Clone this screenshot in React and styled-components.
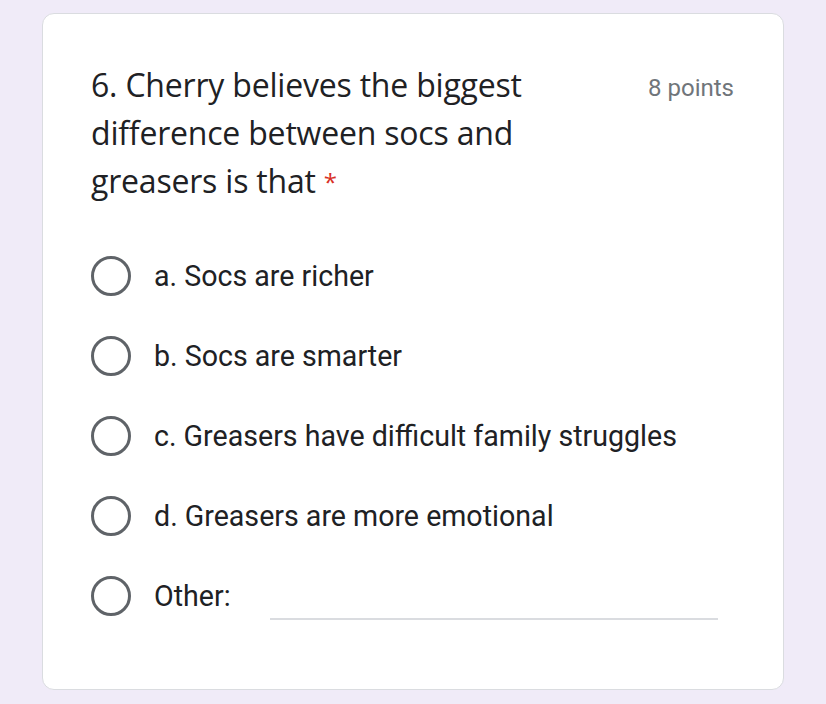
import styled, { createGlobalStyle } from "styled-components";

const Global = createGlobalStyle`
  html, body {
    margin: 0;
    padding: 0;
    background: #f0ebf8;
  }
`;

const Page = styled.div`
  width: 826px;
  height: 704px;
  box-sizing: border-box;
  padding: 13px 42px 14px 42px;
`;

const Card = styled.div`
  box-sizing: border-box;
  height: 100%;
  background: #fff;
  border: 1px solid #dadce0;
  border-radius: 12px;
  padding: 47px 49px 0 48px;
`;

const Header = styled.div`
  display: flex;
  justify-content: space-between;
  align-items: flex-start;
`;

const Title = styled.div`
  width: 460px;
  font-family: "Open Sans", sans-serif;
  font-size: 32px;
  letter-spacing: -0.2px;
  line-height: 48px;
  color: #202124;
`;

const Star = styled.span`
  color: #d93025;
  font-size: 24px;
  line-height: 1;
  vertical-align: 2px;
`;

const Points = styled.div`
  font-family: Roboto, sans-serif;
  font-size: 24px;
  line-height: 48px;
  color: #70757a;
  margin-top: 3px;
`;

const Options = styled.div`
  display: flex;
  flex-direction: column;
  margin-top: 31px;
`;

const Row = styled.label`
  display: flex;
  align-items: center;
  height: 80px;
  gap: 23px;
`;

const Radio = styled.span`
  box-sizing: border-box;
  width: 40px;
  height: 40px;
  border: 3.5px solid #5f6368;
  border-radius: 50%;
  flex: none;
`;

const Label = styled.span`
  font-family: Roboto, sans-serif;
  font-size: 28.6px;
  color: #202124;
`;

const OtherLine = styled.div`
  flex: 1;
  align-self: flex-end;
  margin: 0 16px 16px 16px;
  border-bottom: 2px solid #dadce0;
`;

const options = [
  "a. Socs are richer",
  "b. Socs are smarter",
  "c. Greasers have difficult family struggles",
  "d. Greasers are more emotional",
];

export default function App() {
  return (
    <Page>
      <Global />
      <Card>
        <Header>
          <Title>
            6. Cherry believes the biggest difference between socs and greasers is that <Star>*</Star>
          </Title>
          <Points>8 points</Points>
        </Header>
        <Options>
          {options.map((o) => (
            <Row key={o}>
              <Radio />
              <Label>{o}</Label>
            </Row>
          ))}
          <Row>
            <Radio />
            <Label>Other:</Label>
            <OtherLine />
          </Row>
        </Options>
      </Card>
    </Page>
  );
}
